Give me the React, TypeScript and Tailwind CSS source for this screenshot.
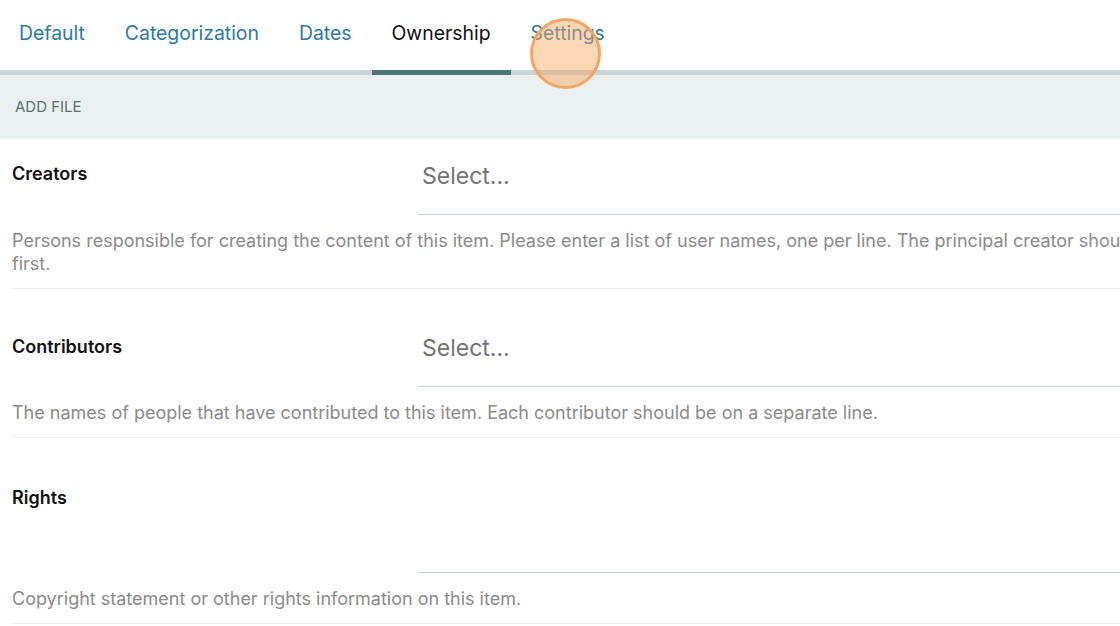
import React from "react";

const tabs = [
  { name: "Default", active: false },
  { name: "Categorization", active: false },
  { name: "Dates", active: false },
  { name: "Ownership", active: true },
  { name: "Settings", active: false },
];

export default function App() {
  return (
    <div
      className="relative w-[1120px] h-[626px] overflow-hidden bg-white"
      style={{ fontFamily: "Inter, 'Noto Sans', sans-serif" }}
    >
      <div className="w-[1240px]">
        {/* Tabs */}
        <div className="flex h-[75px] border-b-[5px] border-[#c9d5d7]">
          {tabs.map((t) => (
            <div
              key={t.name}
              className={`relative flex items-start pt-[20px] px-5 text-[19.4px] leading-[27px] ${
                t.active ? "text-[#111111]" : "text-[#2b7aa6]"
              } ${t.name === "Default" ? "pl-[19px]" : ""}`}
            >
              {t.name}
              {t.active && (
                <div className="absolute left-0 right-0 bottom-[-5px] h-[5px] bg-[#4e7576]" />
              )}
            </div>
          ))}
        </div>
        {/* Add file bar */}
        <div className="h-[64px] bg-[#ebf0f0] flex items-center pl-[15px] text-[15px] text-[#5b7272]">
          ADD FILE
        </div>

        {/* Creators */}
        <div className="mx-3 border-b border-[#e6ebeb] pb-[13px]">
          <div className="flex">
            <div className="w-[406px] pt-[23px] text-[18px] leading-[24px] font-semibold text-[#111111]">
              Creators
            </div>
            <div className="flex-1 h-[76px] border-b border-[#c8d3d3] flex items-center pl-[4px] text-[23px] text-[#737373]">
              Select...
            </div>
          </div>
          <p className="mt-[14px] text-[18px] leading-[23px] text-[#8b8b8b]">
            Persons responsible for creating the content of this item. Please enter a list of user names, one per line. The principal creator should come first.
          </p>
        </div>

        {/* Contributors */}
        <div className="mx-3 border-b border-[#e6ebeb] pt-[21px] pb-[13px]">
          <div className="flex">
            <div className="w-[406px] pt-[25px] text-[18px] leading-[24px] font-semibold text-[#111111]">
              Contributors
            </div>
            <div className="flex-1 h-[77px] border-b border-[#c8d3d3] flex items-center pl-[4px] text-[23px] text-[#737373]">
              Select...
            </div>
          </div>
          <p className="mt-[14px] text-[18px] leading-[23px] text-[#8b8b8b]">
            The names of people that have contributed to this item. Each contributor should be on a separate line.
          </p>
        </div>

        {/* Rights */}
        <div className="mx-3 border-b border-[#e6ebeb] pt-[20px] pb-[13px]">
          <div className="flex">
            <div className="w-[406px] pt-[28px] text-[18px] leading-[24px] font-semibold text-[#111111]">
              Rights
            </div>
            <div className="flex-1 h-[115px] border-b border-[#c8d3d3]" />
          </div>
          <p className="mt-[14px] text-[18px] leading-[23px] text-[#8b8b8b]">
            Copyright statement or other rights information on this item.
          </p>
        </div>
      </div>

      {/* Click indicator */}
      <div className="absolute left-[530px] top-[18px] w-[71px] h-[71px] rounded-full border-[3px] border-[#f5a562] bg-[#f9a65e]/45" />
    </div>
  );
}
